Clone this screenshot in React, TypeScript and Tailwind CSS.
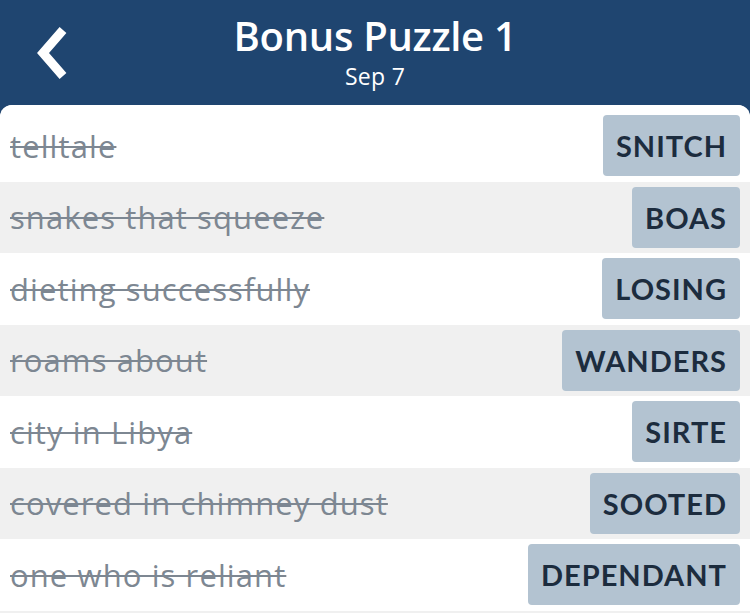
const ROWS = [
  { clue: 'telltale', answer: 'SNITCH' },
  { clue: 'snakes that squeeze', answer: 'BOAS' },
  { clue: 'dieting successfully', answer: 'LOSING' },
  { clue: 'roams about', answer: 'WANDERS' },
  { clue: 'city in Libya', answer: 'SIRTE' },
  { clue: 'covered in chimney dust', answer: 'SOOTED' },
  { clue: 'one who is reliant', answer: 'DEPENDANT' },
];

function BackChevron() {
  return (
    <svg width="40" height="56" viewBox="0 0 40 56" className="block">
      <path d="M29 5 L9 28 L29 51" fill="none" stroke="white" strokeWidth="9" strokeLinecap="butt" strokeLinejoin="miter" />
    </svg>
  );
}

export default function App() {
  return (
    <div className="w-[750px] h-[613px] overflow-hidden bg-[#1f4570] font-['Lato',sans-serif]">
      {/* header */}
      <header className="relative h-[105px] flex flex-col items-center text-white">
        <button className="absolute left-[34px] top-[25px]">
          <BackChevron />
        </button>
        <h1 className="mt-[12px] text-[40px] leading-[47px] font-semibold font-['Open_Sans',sans-serif] tracking-[-0.3px]">
          Bonus Puzzle 1
        </h1>
        <div className="text-[23px] leading-[28px] mt-[3px] font-['Open_Sans',sans-serif] tracking-[0.3px]">Sep 7</div>
      </header>

      {/* clue list */}
      <div className="bg-[#f0f0f0] rounded-t-[12px] overflow-hidden h-full">
        <div className="bg-white h-[5px]" />
        {ROWS.map((row, i) => (
          <div
            key={row.clue}
            className={`h-[71.5px] flex items-center justify-between pl-[10px] pr-[10px] ${i % 2 === 0 ? 'bg-white' : 'bg-[#f0f0f0]'}`}
          >
            <span className="text-[31px] text-[#7d8792] line-through decoration-[2px] decoration-[#7d8792] font-['Open_Sans',sans-serif] tracking-[1.1px] whitespace-nowrap">
              {row.clue}
            </span>
            <span className="h-[61px] flex items-center px-[13px] rounded-[4px] bg-[#b3c3d1] text-[#1c2c3e] text-[29px] font-bold tracking-[1px]">
              {row.answer}
            </span>
          </div>
        ))}
      </div>
    </div>
  );
}
